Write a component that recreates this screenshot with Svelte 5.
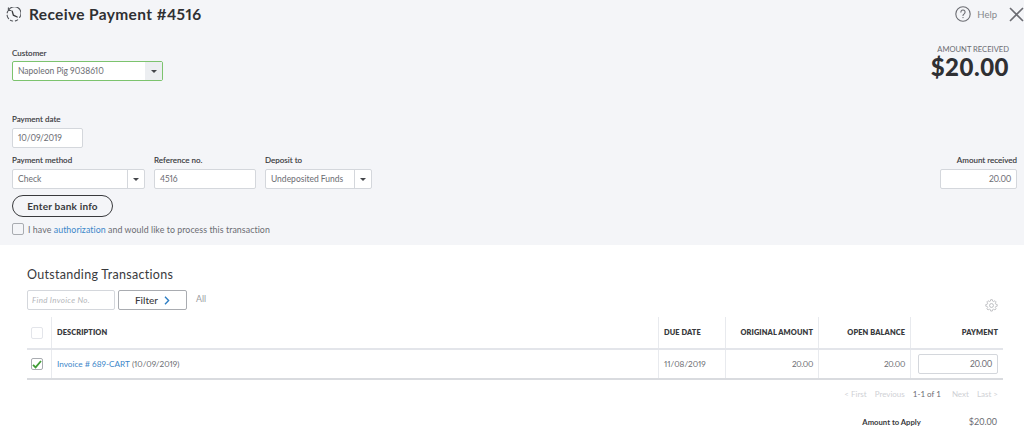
<script>
  const columns = [
    { label: 'DESCRIPTION', cls: 'desc' },
    { label: 'DUE DATE', cls: 'due' },
    { label: 'ORIGINAL AMOUNT', cls: 'num orig' },
    { label: 'OPEN BALANCE', cls: 'num open' },
    { label: 'PAYMENT', cls: 'num pay' }
  ];
</script>

<div class="page">
  <section class="panel">
    <header class="top">
      <div class="title">
        <svg class="clock" width="15" height="15" viewBox="0 0 15 15" fill="none" stroke="#55585d" stroke-width="1.15" stroke-linecap="round">
          <path d="M2.6 3.2A6.6 6.6 0 1 1 13.6 10.4" />
          <path d="M11.6 12.9a6.6 6.6 0 0 1-2.2 1" />
          <path d="M6.6 14a6.6 6.6 0 0 1-2.2-.7" />
          <path d="M2.6 11.6a6.6 6.6 0 0 1-1.5-3.4" />
          <path d="M1.2 5.8q.2-.8.6-1.5" />
          <path d="M2.4 .9v2.6h2.6" />
          <path d="M6.2 4.2l1.2 4 3.8 1.8" stroke="#393a3d" stroke-width="1.3" />
        </svg>
        <h1>Receive Payment #4516</h1>
      </div>
      <div class="tools">
        <svg class="help-icon" width="16" height="16" viewBox="0 0 16 16" fill="none" stroke="#6b6c72" stroke-width="1.1">
          <circle cx="8" cy="8" r="7.2" />
          <path d="M5.9 6.1a2.1 2.1 0 1 1 3.2 1.8c-.7.4-1.1.8-1.1 1.6" stroke-linecap="round"/>
          <circle cx="8" cy="11.6" r=".7" fill="#6b6c72" stroke="none"/>
        </svg>
        <span class="help">Help</span>
        <svg class="close" width="15" height="15" viewBox="0 0 15 15" stroke="#6b6c72" stroke-width="1.6" fill="none">
          <path d="M1 1l13 13M14 1L1 14" />
        </svg>
      </div>
    </header>

    <div class="row-customer">
      <div class="field">
        <span class="label">Customer</span>
        <div class="select customer">
          <span class="val">Napoleon Pig 9038610</span>
          <span class="caret shaded"><i></i></span>
        </div>
      </div>
      <div class="received">
        <span class="rc-label">AMOUNT RECEIVED</span>
        <span class="rc-value">$20.00</span>
      </div>
    </div>

    <div class="field date-field">
      <span class="label">Payment date</span>
      <div class="input date">10/09/2019</div>
    </div>

    <div class="row-method">
      <div class="field">
        <span class="label">Payment method</span>
        <div class="select method">
          <span class="val">Check</span>
          <span class="caret"><i></i></span>
        </div>
      </div>
      <div class="field">
        <span class="label">Reference no.</span>
        <div class="input ref">4516</div>
      </div>
      <div class="field">
        <span class="label">Deposit to</span>
        <div class="select deposit">
          <span class="val">Undeposited Funds</span>
          <span class="caret"><i></i></span>
        </div>
      </div>
      <div class="field right">
        <span class="label">Amount received</span>
        <div class="input amount">20.00</div>
      </div>
    </div>

    <button class="bank">Enter bank info</button>

    <label class="auth">
      <span class="box"></span>
      <span>I have <a href="#a">authorization</a> and would like to process this transaction</span>
    </label>
  </section>

  <section class="lower">
    <h2>Outstanding Transactions</h2>
    <div class="filters">
      <div class="find">Find Invoice No.</div>
      <button class="filter">Filter
        <svg width="6" height="9" viewBox="0 0 6 9" fill="none" stroke="#2f7fc4" stroke-width="1.4"><path d="M1 .8l3.6 3.7L1 8.2" /></svg>
      </button>
      <span class="all">All</span>
      <svg class="gear" width="13" height="13" viewBox="0 0 24 24" fill="none" stroke="#b4b6ba" stroke-width="1.6">
        <circle cx="12" cy="12" r="3.6"/>
        <path d="M10.3 1.5h3.4l.6 3 2.2.9 2.6-1.7 2.4 2.4-1.7 2.6.9 2.2 3 .6v3.4l-3 .6-.9 2.2 1.7 2.6-2.4 2.4-2.6-1.7-2.2.9-.6 3h-3.4l-.6-3-2.2-.9-2.6 1.7-2.4-2.4 1.7-2.6-.9-2.2-3-.6v-3.4l3-.6.9-2.2L2.5 6.1l2.4-2.4 2.6 1.7 2.2-.9z" transform="translate(12 12) scale(.9) translate(-12 -13.5)"/>
      </svg>
    </div>

    <div class="table">
      <div class="thead">
        <div class="cell chk"><span class="box faint"></span></div>
        {#each columns as c}
          <div class="cell {c.cls}">{c.label}</div>
        {/each}
      </div>
      <div class="tbody">
        <div class="cell chk">
          <span class="box checked">
            <svg width="10" height="9" viewBox="0 0 10 9" fill="none" stroke="#3f9c35" stroke-width="1.8"><path d="M1 4.8l2.6 2.6L9 1" /></svg>
          </span>
        </div>
        <div class="cell desc"><a href="#i">Invoice # 689-CART</a>&nbsp;(10/09/2019)</div>
        <div class="cell due">11/08/2019</div>
        <div class="cell num orig">20.00</div>
        <div class="cell num open">20.00</div>
        <div class="cell num pay"><div class="pay-input">20.00</div></div>
      </div>
    </div>

    <nav class="pager">
      <span>&lt; First</span>
      <span>Previous</span>
      <b>1-1 of 1</b>
      <span>Next</span>
      <span>Last &gt;</span>
    </nav>

    <div class="apply">
      <span class="apply-label">Amount to Apply</span>
      <span class="apply-value">$20.00</span>
    </div>
  </section>
</div>

<style>
  :global(body) {
    margin: 0;
    background: #fff;
  }
  .page {
    width: 1024px;
    height: 433px;
    overflow: hidden;
    font-family: Lato, "Open Sans", sans-serif;
    font-variant-numeric: proportional-nums;
    color: #6b6c72;
    font-size: 8.5px;
  }
  .panel {
    background: #f4f5f8;
    height: 245px;
    padding: 0 7px 0 12px;
    box-sizing: border-box;
    display: flex;
    flex-direction: column;
  }
  .top {
    height: 28px;
    margin-left: -6px;
    margin-right: -7px;
    display: flex;
    align-items: center;
    justify-content: space-between;
  }
  .title {
    display: flex;
    align-items: center;
    gap: 8px;
  }
  .clock { flex: none; }
  h1 {
    margin: 0;
    font-size: 15.5px;
    font-weight: 700;
    color: #2f3033;
    letter-spacing: .35px;
  }
  .tools {
    display: flex;
    align-items: center;
  }
  .help-icon { margin-right: 6px; }
  .help { font-size: 9.5px; color: #85878c; margin-right: 12px; }

  .field {
    display: flex;
    flex-direction: column;
  }
  .label {
    font-size: 8px;
    line-height: 10px;
    height: 10px;
    margin-bottom: 3px;
    color: #393a3d;
    font-weight: 500;
    -webkit-text-stroke: .1px #393a3d;
  }
  .row-customer {
    margin-top: 20px;
    display: flex;
    justify-content: space-between;
    align-items: flex-start;
    height: 66px;
  }
  .select, .input {
    height: 20px;
    box-sizing: border-box;
    background: #fff;
    border: 1px solid #d4d7dc;
    border-radius: 2px;
    display: flex;
    align-items: center;
    font-size: 8.5px;
    color: #6b6c72;
  }
  .select .val { flex: 1; padding-left: 5px; }
  .input { padding-left: 5px; }
  .date, .ref { letter-spacing: -.1px; }
  .customer { width: 151px; border: 1px solid #7cc36e; }
  .caret {
    width: 17px;
    height: 100%;
    border-left: 1px solid #d4d7dc;
    display: flex;
    align-items: center;
    justify-content: center;
    box-sizing: border-box;
  }
  .caret.shaded { background: #eceef1; border-left: 0; }
  .caret i {
    width: 0;
    height: 0;
    border-left: 3px solid transparent;
    border-right: 3px solid transparent;
    border-top: 3.5px solid #44464a;
  }
  .received {
    display: flex;
    flex-direction: column;
    align-items: flex-end;
    margin-right: 8px;
    margin-top: -5px;
  }
  .rc-label { font-size: 7.6px; line-height: 12px; color: #6b6c72; }
  .rc-value {
    font-size: 24px;
    line-height: 24px;
    font-weight: 900;
    color: #2f3033;
    letter-spacing: .5px;
    font-variant-numeric: tabular-nums;
  }

  .date { width: 71px; }
  .date-field .label { margin-bottom: 4px; }
  .row-method {
    margin-top: 7px;
    display: flex;
  }
  .row-method .label { margin-bottom: 4px; }
  .method { width: 133px; margin-right: 9px; }
  .ref { width: 102px; margin-right: 9px; }
  .deposit { width: 107px; }
  .right { margin-left: auto; align-items: flex-end; }
  .amount {
    width: 77px;
    justify-content: flex-end;
    padding-right: 5px;
    padding-left: 0;
    letter-spacing: -.3px;
  }
  .bank {
    margin-top: 6px;
    width: 101px;
    height: 22px;
    border-radius: 11px;
    border: 1px solid #393a3d;
    background: transparent;
    font-family: inherit;
    font-size: 10px;
    font-weight: 700;
    color: #393a3d;
    letter-spacing: .2px;
    padding: 0;
  }
  .auth {
    margin-top: 6px;
    display: flex;
    align-items: center;
    gap: 4px;
    font-size: 8.8px;
    letter-spacing: .07px;
  }
  .box {
    width: 12px;
    height: 12px;
    box-sizing: border-box;
    border: 1px solid #a9acb1;
    border-radius: 2px;
    display: flex;
    align-items: center;
    justify-content: center;
    flex: none;
    background: #fff;
  }
  .auth .box { background: transparent; }
  a { color: #3b86c9; text-decoration: none; }

  .lower {
    padding: 0 21px 0 27px;
    position: relative;
  }
  h2 {
    margin: 22px 0 0;
    font-size: 12.5px;
    line-height: 16px;
    font-weight: 400;
    color: #393a3d;
    letter-spacing: .3px;
  }
  .filters {
    margin-top: 7px;
    height: 20px;
    display: flex;
    align-items: center;
    position: relative;
  }
  .find {
    width: 88px;
    height: 20px;
    box-sizing: border-box;
    border: 1px solid #d4d7dc;
    border-radius: 2px;
    font-style: italic;
    font-size: 8px;
    color: #b4b6ba;
    display: flex;
    align-items: center;
    padding-left: 4px;
    letter-spacing: .3px;
  }
  .filter {
    margin-left: 3px;
    width: 69px;
    height: 20px;
    background: #fff;
    border: 1px solid #a9acb1;
    border-radius: 2px;
    font-family: inherit;
    font-size: 10px;
    font-weight: 500;
    color: #393a3d;
    display: flex;
    align-items: center;
    justify-content: center;
    gap: 6px;
    padding: 0;
  }
  .all {
    margin-left: 9px;
    margin-top: -3px;
    font-size: 8.8px;
    color: #9a9ca1;
  }
  .gear {
    position: absolute;
    right: 5px;
    top: 9px;
  }
  .table {
    margin-top: 7px;
  }
  .thead, .tbody {
    display: grid;
    grid-template-columns: 24px 607px 67px 93px 92px 93px;
  }
  .thead {
    height: 33px;
    border-bottom: 2px solid #e3e5ea;
    box-sizing: border-box;
    font-size: 7.4px;
    font-weight: 800;
    color: #393a3d;
    letter-spacing: .1px;
  }
  .tbody {
    height: 30px;
    border-bottom: 2px solid #d9dbdf;
    box-sizing: border-box;
    font-size: 8.2px;
  }
  .tbody .num { letter-spacing: -.3px; }
  .cell {
    display: flex;
    align-items: center;
    padding: 0 5px;
    border-left: 1px solid #e8eaee;
    box-sizing: border-box;
  }
  .cell.chk { border-left: 0; padding: 0 0 0 4px; }
  .num { justify-content: flex-end; }
  .box.faint { border-color: #e3e5ea; }
  .pay-input {
    width: 80px;
    height: 20px;
    box-sizing: border-box;
    border: 1px solid #d4d7dc;
    border-radius: 2px;
    display: flex;
    align-items: center;
    justify-content: flex-end;
    padding-right: 5px;
    font-size: 8.5px;
  }
  .pager {
    margin-top: 9px;
    display: flex;
    justify-content: flex-end;
    gap: 8px;
    padding-right: 5px;
    font-size: 8px;
    line-height: 10px;
    color: #cfd1d5;
    font-variant-numeric: tabular-nums;
  }
  .pager b { font-weight: 400; color: #6b6c72; margin: 0 3px 0 0; }
  .apply {
    margin-top: 18px;
    display: flex;
    justify-content: flex-end;
    align-items: center;
    padding-right: 6px;
    line-height: 10px;
  }
  .apply-label { font-size: 7.7px; font-weight: 700; color: #393a3d; margin-right: 48px; }
  .apply-value { font-size: 9px; color: #6b6c72; font-variant-numeric: tabular-nums; }
</style>
